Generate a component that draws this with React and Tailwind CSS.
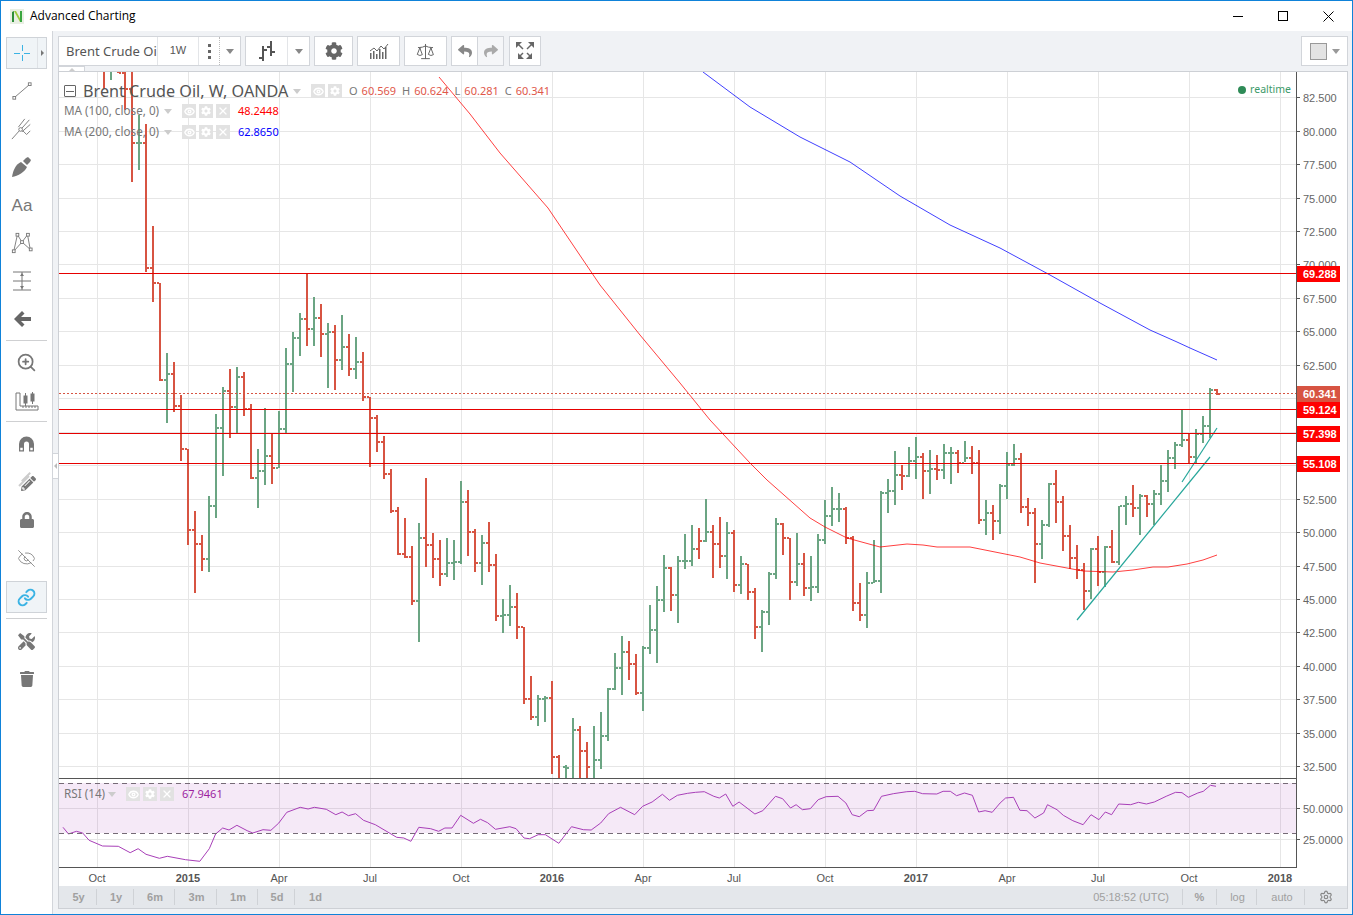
import React from "react";
import { FaCog, FaReply, FaShare, FaLock, FaTrash, FaTools, FaPencilAlt } from "react-icons/fa";
import { Eye, EyeOff, Link, Scale, Settings, X, ZoomIn } from "lucide-react";

const GREEN = "#6ba583";
const RED = "#d75442";

// weekly bars, read as [high, low, close, up, open?] in crop coordinates
const seg = (x0, base, k, rows) =>
  rows.map((r, i) => ({
    x: x0 + 7 * i,
    h: Math.round(base + r[0] / k),
    l: Math.round(base + r[1] / k),
    c: Math.round(base + r[2] / k),
    up: r[3] === 1,
    o: r[4] != null ? Math.round(base + r[4] / k) : null,
  }));

const rawBars = [
  ...seg(104, 72, 2.9037, [
    [-60, 50, -30, 0], [-60, 22, -10, 1], [-60, 4, 2, 0], [-60, 110, 50, 0], [-60, 318, 205, 0],
    [125, 285, 205, 1], [152, 580, 568, 0], [447, 667, 614, 0], [614, 897, 895, 0], [817, 1020, 876, 1],
    [843, 988, 970, 0], [938, 1130, 1094, 0], [1094, 1374, 1330, 0], [1275, 1512, 1370, 0], [1343, 1450, 1414, 0],
    [1232, 1453, 1260, 1], [993, 1296, 1033, 1], [916, 1174, 925, 1], [862, 1064, 972, 0], [858, 1047, 887, 1],
    [871, 1000, 978, 0], [965, 1183, 1180, 0], [1096, 1265, 1158, 1], [977, 1200, 1114, 1], [1050, 1195, 1150, 0],
    [985, 1150, 1036, 1], [800, 1050, 848, 1], [756, 930, 772, 1], [700, 824, 716, 1], [585, 797, 745, 0],
    [654, 795, 713, 1], [675, 827, 760, 0], [730, 918, 755, 1], [736, 924, 835, 0], [707, 864, 798, 1],
    [762, 882, 861, 0], [770, 890, 842, 1], [814, 956, 945, 0], [945, 1148, 1004, 0], [997, 1102, 1073, 0],
  ]),
  ...seg(384, 380, 3, [
    [168, 296, 282, 0], [267, 400, 393, 0], [382, 526, 522, 0], [415, 535, 530, 0], [498, 674, 662, 0],
    [430, 785, 473, 1], [295, 560, 494, 0], [460, 593, 537, 0], [481, 617, 581, 0], [475, 590, 549, 1],
    [481, 599, 546, 1], [304, 551, 366, 1], [331, 527, 455, 0], [448, 575, 549, 0], [466, 614, 488, 1],
    [427, 575, 554, 0], [523, 722, 707, 0], [658, 758, 705, 1], [616, 737, 680, 1], [640, 776, 740, 0],
    [740, 971, 957, 0], [889, 1021, 1011, 0], [946, 1037, 957, 1], [949, 1025, 953, 1], [904, 1181, 1130, 0],
    [1126, 1300, 1260, 0], [1155, 1300, 1163, 1, 1160], [1015, 1300, 1050, 1, 1230], [1039, 1300, 1112, 0], [1087, 1300, 1161, 0],
    [1039, 1300, 1139, 1, 1230], [997, 1166, 1068, 1], [923, 1082, 927, 1], [820, 930, 864, 1], [769, 944, 816, 1],
    [784, 899, 852, 0], [823, 944, 939, 0], [797, 992, 804, 1], [676, 821, 749, 1], [619, 848, 660, 1],
    [526, 695, 564, 1], [562, 692, 645, 0], [529, 728, 543, 1],
  ]),
  ...seg(685, 420, 3, [
    [343, 446, 423, 1], [316, 437, 387, 1], [325, 416, 362, 0], [238, 367, 336, 1], [316, 473, 372, 0],
    [292, 443, 408, 0], [307, 476, 339, 1], [331, 515, 495, 0], [409, 521, 431, 1], [431, 539, 516, 0],
    [505, 656, 621, 0], [571, 695, 575, 1], [457, 614, 462, 1], [295, 476, 312, 1], [310, 404, 355, 0],
    [353, 539, 486, 0], [340, 497, 432, 1], [400, 527, 504, 0], [409, 542, 500, 1], [343, 518, 360, 1],
    [241, 371, 288, 1], [202, 317, 268, 1], [220, 305, 268, 1], [262, 371, 353, 0], [349, 572, 549, 0],
    [490, 602, 585, 0], [457, 623, 489, 1], [361, 488, 483, 1], [214, 518, 218, 1], [178, 278, 212, 1],
    [94, 254, 165, 1], [136, 209, 168, 0], [82, 170, 122, 1], [52, 176, 110, 1], [100, 236, 153, 0],
    [91, 221, 147, 1], [106, 179, 149, 0],
  ]),
  ...seg(944, 390, 3, [
    [163, 266, 188, 1], [172, 281, 188, 1], [181, 248, 218, 0], [154, 215, 203, 1], [168, 251, 218, 0],
    [181, 401, 390, 0], [331, 434, 369, 1], [346, 449, 393, 0], [283, 431, 288, 1], [186, 326, 225, 1],
    [162, 227, 207, 1], [190, 368, 351, 0], [325, 407, 368, 0], [355, 578, 462, 0], [391, 506, 405, 1],
    [280, 410, 282, 1], [241, 398, 336, 0], [319, 482, 437, 0], [406, 538, 503, 0], [466, 566, 540, 0],
    [520, 660, 603, 0], [475, 628, 477, 1], [439, 587, 545, 0], [468, 590, 470, 1], [421, 520, 517, 0],
    [347, 524, 347, 1], [319, 404, 342, 1], [286, 382, 353, 0], [313, 434, 317, 1], [316, 380, 342, 0],
    [301, 404, 311, 1], [226, 344, 272, 1], [181, 305, 204, 1], [157, 236, 165, 1], [60, 172, 150, 1],
    [128, 220, 202, 0], [118, 220, 133, 1], [79, 160, 107, 1], [-6, 143, 1, 1], [-3, 15, 12, 0, 0],
  ]),
];

const priceLabels = ["82.500", "80.000", "77.500", "75.000", "72.500", "70.000", "67.500", "65.000", "62.500", "60.000", "57.500", "55.000", "52.500", "50.000", "47.500", "45.000", "42.500", "40.000", "37.500", "35.000", "32.500"];
// these sit fully under a price tag in the picture
const hiddenPrices = ["60.000", "57.500", "55.000"];
const priceY = (i) => Math.round(97.2 + 33.45 * i);

const timeLabels = [
  [97, "Oct"], [188, "2015", true], [279, "Apr"], [370, "Jul"], [461, "Oct"], [552, "2016", true], [643, "Apr"],
  [734, "Jul"], [825, "Oct"], [916, "2017", true], [1007, "Apr"], [1098, "Jul"], [1189, "Oct"], [1280, "2018", true],
];

const ma100 = "439,77 470,114 500,153 548,208 575,248 600,285 640,335 680,383 710,420 750,463 767,480 810,518 825,527 847,538 880,547 907,544 923,545 937,547 970,547 1000,553 1020,557 1040,563 1067,568 1083,571 1113,572 1133,570 1153,567 1168,567 1187,564 1203,560 1217,555";
const ma200 = "703,72 750,107 800,137 850,162 900,196 950,225 1000,248 1050,275 1100,303 1150,330 1177,342 1190,348 1217,360";

const rsiRaw = [
  [5,148],[12,168],[22,160],[30,165],[38,187],[55,204],[75,205],[90,224],[100,212],[110,229],[127,241],[137,235],[160,245],[178,250],[190,212],[198,168],[207,150],[215,156],[225,142],[238,158],[245,165],[258,155],[268,157],[278,135],[288,103],[305,88],[315,93],[323,88],[338,94],[350,110],[358,102],[366,113],[375,107],[385,127],[400,140],[427,178],[436,180],[445,190],[455,148],[470,152],[480,160],[488,150],[497,150],[508,112],[524,136],[533,124],[542,134],[552,154],[570,146],[578,152],[588,180],[595,182],[606,170],[615,170],[632,196],[648,146],[663,155],[673,156],[685,135],[695,107],[710,88],[728,110],[738,85],[750,72],[763,49],[772,67],[782,52],[795,46],[805,43],[816,41],[828,55],[835,60],[843,48],[852,85],[860,72],[880,108],[890,98],[906,55],[915,62],[925,90],[932,80],[940,95],[950,92],[960,65],[970,56],[985,55],[995,75],[1003,110],[1012,116],[1022,98],[1030,97],[1040,55],[1055,47],[1072,41],[1082,40],[1092,47],[1110,48],[1118,40],[1127,40],[1135,53],[1145,45],[1155,52],[1163,102],[1171,98],[1180,103],[1190,75],[1197,60],[1207,58],[1215,97],[1224,98],[1234,120],[1245,105],[1250,80],[1262,95],[1270,112],[1282,128],[1295,140],[1305,110],[1315,125],[1323,102],[1331,110],[1340,78],[1355,80],[1365,73],[1375,78],[1385,72],[1400,55],[1412,43],[1420,44],[1428,58],[1440,45],[1447,40],[1456,22],[1463,25],
];
const rsiLine = rsiRaw.map(([x, y]) => `${(59 + x / 1.2645).toFixed(1)},${(778 + y / 3).toFixed(1)}`).join(" ");

const levels = [
  [273, "69.288"],
  [409, "59.124"],
  [433, "57.398"],
  [463, "55.108"],
];

const ohlc = [["O", "60.569"], ["H", "60.624"], ["L", "60.281"], ["C", "60.341"]];

const Caret = ({ className = "" }) => (
  <span className={`w-0 h-0 border-l-[4px] border-r-[4px] border-t-[5px] border-l-transparent border-r-transparent ${className}`} />
);

const Chip = ({ children }) => (
  <span className="w-[14px] h-[14px] bg-[#e2e2e2] text-white flex items-center justify-center">{children}</span>
);

const Chips = ({ close = true }) => (
  <span className="flex gap-[3px]">
    <Chip><Eye size={11} strokeWidth={3} /></Chip>
    <Chip><FaCog size={10} /></Chip>
    {close && <Chip><X size={12} strokeWidth={2.5} /></Chip>}
  </span>
);

const ChartSvg = () => (
  <svg width="1288" height="814" viewBox="59 72 1288 814" className="block" fontFamily="'Liberation Sans', Arial, sans-serif">
    <defs>
      <clipPath id="main-pane"><rect x="59" y="72" width="1237" height="706" /></clipPath>
    </defs>
    <g shapeRendering="crispEdges">
      {timeLabels.map(([x]) => <rect key={x} x={x} y="72" width="1" height="795" fill="#e6e6e6" />)}
      {priceLabels.map((_, i) => <rect key={i} x="59" y={priceY(i)} width="1237" height="1" fill="#e6e6e6" />)}
      <rect x="59" y="808" width="1237" height="1" fill="#e6e6e6" />
      <rect x="59" y="839" width="1237" height="1" fill="#e6e6e6" />
      <rect x="59" y="783" width="1237" height="50" fill="#9c27b0" fillOpacity="0.1" />
    </g>
    <g clipPath="url(#main-pane)">
      <g shapeRendering="crispEdges">
        {rawBars.map((b, i) => {
          const open = b.o != null ? b.o : i > 0 ? rawBars[i - 1].c : b.c;
          const color = b.up ? GREEN : RED;
          return (
            <g key={b.x} fill={color}>
              <rect x={b.x - 1} y={b.h} width="2" height={b.l - b.h} />
              <rect x={b.x - 3} y={open - 1} width="2" height="2" />
              <rect x={b.x + 1} y={b.c - 1} width="2" height="2" />
            </g>
          );
        })}
      </g>
      <polyline points={ma100} fill="none" stroke="#ff0000" strokeOpacity="0.75" strokeWidth="1" />
      <polyline points={ma200} fill="none" stroke="#0000ff" strokeOpacity="0.75" strokeWidth="1" />
      <line x1="1077" y1="620" x2="1210" y2="457" stroke="#26a69a" strokeWidth="1.2" />
      <line x1="1182" y1="482" x2="1217" y2="428" stroke="#26a69a" strokeWidth="1.2" />
      <g shapeRendering="crispEdges">
        <rect x="59" y="273" width="1237" height="1" fill="#e60000" />
        <rect x="59" y="409" width="1237" height="1" fill="#e60000" />
        <rect x="59" y="433" width="1237" height="1" fill="#e60000" />
        <rect x="59" y="463" width="1237" height="1" fill="#e60000" />
        <line x1="59" y1="393.5" x2="1296" y2="393.5" stroke={RED} strokeDasharray="2 2" />
      </g>
    </g>
    <polyline points={rsiLine} fill="none" stroke="#a83fb8" strokeWidth="1" />
    <g shapeRendering="crispEdges">
      <line x1="59" y1="783.5" x2="1296" y2="783.5" stroke="#756a76" strokeDasharray="5 4" />
      <line x1="59" y1="833.5" x2="1296" y2="833.5" stroke="#756a76" strokeDasharray="5 4" />
      <rect x="59" y="778" width="1237" height="1" fill="#555" />
      <rect x="59" y="867" width="1237" height="1" fill="#555" />
      <rect x="1296" y="72" width="1" height="796" fill="#555" />
      {priceLabels.map((_, i) => <rect key={i} x="1297" y={priceY(i)} width="3" height="1" fill="#555" />)}
      <rect x="1297" y="808" width="3" height="1" fill="#555" />
      <rect x="1297" y="839" width="3" height="1" fill="#555" />
    </g>
    <g fontSize="11" fill="#666">
      {priceLabels.map((t, i) => hiddenPrices.includes(t) ? null : <text key={t} x="1303" y={priceY(i) + 5}>{t}</text>)}
      <text x="1303" y="813">50.0000</text>
      <text x="1303" y="844">25.0000</text>
    </g>
    <g fontSize="11" fill="#555" textAnchor="middle">
      {timeLabels.map(([x, t, bold]) => <text key={x} x={x} y="882" fontWeight={bold ? "700" : "400"}>{t}</text>)}
    </g>
    <g shapeRendering="crispEdges">
      <rect x="1297" y="386" width="43" height="16" fill={RED} />
      {levels.map(([y]) => <rect key={y} x="1297" y={y - 7} width="43" height="16" fill="#ff0000" />)}
    </g>
    <g fontSize="11" fontWeight="700" fill="#fff">
      <text x="1303" y="398">60.341</text>
      {levels.map(([y, t]) => <text key={t} x="1303" y={y + 5}>{t}</text>)}
    </g>
  </svg>
);

const Legend = () => (
  <div className="absolute left-0 top-0 pl-[5px] text-[11.7px] text-[#777] font-['Noto_Sans',sans-serif] whitespace-nowrap">
    <div className="h-[20px] mt-[9px] flex items-center">
      <span className="w-[12px] h-[12px] border border-[#666] rounded-[1px] flex items-center justify-center">
        <span className="w-[8px] h-px bg-[#666]" />
      </span>
      <span className="ml-[7px] w-[206px] text-[16.2px] text-[#555]">Brent Crude Oil, W, OANDA</span>
      <Caret className="ml-[4px] border-t-[#ccc]" />
      <span className="ml-[10px]"><Chips close={false} /></span>
      <span className="ml-[7px] flex gap-[6px] text-[11px] text-[#777]">
        {ohlc.map(([k, v]) => (
          <span key={k} className="flex gap-[4px]">
            <span>{k}</span>
            <span className="text-[#e0574a]">{v}</span>
          </span>
        ))}
      </span>
    </div>
    <div className="h-[20px] flex items-center">
      <span className="w-[96px]">MA (100, close, 0)</span>
      <Caret className="ml-[4px] border-t-[#ccc]" />
      <span className="ml-[10px]"><Chips /></span>
      <span className="ml-[8px] text-[11px] text-[#ff0000]">48.2448</span>
    </div>
    <div className="h-[20px] mt-px flex items-center">
      <span className="w-[96px]">MA (200, close, 0)</span>
      <Caret className="ml-[4px] border-t-[#ccc]" />
      <span className="ml-[10px]"><Chips /></span>
      <span className="ml-[8px] text-[11px] text-[#0000ff]">62.8650</span>
    </div>
  </div>
);

const RsiLegend = () => (
  <div className="absolute left-[5px] top-[712px] h-[20px] flex items-center text-[11.7px] text-[#777] font-['Noto_Sans',sans-serif] whitespace-nowrap">
    <span className="w-[40px]">RSI (14)</span>
    <Caret className="ml-[4px] border-t-[#ccc]" />
    <span className="ml-[10px]"><Chips /></span>
    <span className="ml-[8px] text-[11px] text-[#9c1fa0]">67.9461</span>
  </div>
);

const Group = ({ className = "", children }) => (
  <div className={`h-[30px] bg-white border border-[#d2d5da] flex items-center justify-center shrink-0 ${className}`}>{children}</div>
);

const BarsIcon = () => (
  <svg width="18" height="20" viewBox="0 0 18 20" fill="#555">
    <rect x="4" y="5" width="2" height="15" />
    <rect x="1" y="16" width="3" height="2" />
    <rect x="6" y="8" width="3" height="2" />
    <rect x="12" y="0" width="2" height="15" />
    <rect x="9" y="5" width="3" height="2" />
    <rect x="14" y="10" width="3" height="2" />
  </svg>
);

const IndicatorsIcon = () => (
  <svg width="20" height="16" viewBox="0 0 20 16" fill="#666">
    <rect x="1" y="10" width="1.5" height="6" />
    <rect x="4" y="8" width="1.5" height="8" />
    <rect x="7" y="11" width="1.5" height="5" />
    <rect x="10" y="6" width="1.5" height="10" />
    <rect x="13" y="9" width="1.5" height="7" />
    <rect x="16" y="4" width="1.5" height="12" />
    <polyline points="1,8 5,5 8,8 12,3 15,6 19,1" fill="none" stroke="#666" strokeWidth="1" />
  </svg>
);

const FullIcon = () => (
  <svg width="18" height="18" viewBox="0 0 18 18" fill="#666" stroke="#666">
    <path d="M0 0h6L0 6z" stroke="none" /><path d="M2 2l5 5" strokeWidth="1.5" />
    <path d="M18 0h-6l6 6z" stroke="none" /><path d="M16 2l-5 5" strokeWidth="1.5" />
    <path d="M0 18h6l-6-6z" stroke="none" transform="translate(2 -1)" /><path d="M7 11l-4 4" strokeWidth="1.5" />
    <path d="M18 18h-6l6-6z" stroke="none" transform="translate(-2 -1)" /><path d="M11 11l4 4" strokeWidth="1.5" />
  </svg>
);

const TopBar = () => (
  <div className="relative h-[40px] pl-[5px] pt-[5px] flex gap-[4px] shrink-0">
    <div className="h-[30px] w-[183px] bg-white border border-[#d2d5da] flex shrink-0 text-[#555]">
      <div className="w-[99px] pl-[7px] text-[13px] leading-[28px] overflow-hidden whitespace-nowrap font-['Noto_Sans',sans-serif] border-r border-[#e3e5e8]">Brent Crude Oil</div>
      <div className="w-[41px] text-center text-[11px] leading-[26px] border-r border-[#e3e5e8] font-['Liberation_Sans',sans-serif]">1W</div>
      <div className="w-[21px] flex flex-col items-center justify-center gap-[3px] border-r border-dotted border-[#bbb]">
        <span className="w-[3px] h-[3px] bg-[#666]" />
        <span className="w-[3px] h-[3px] bg-[#666]" />
        <span className="w-[3px] h-[3px] bg-[#666]" />
      </div>
      <div className="flex-1 flex items-center justify-center"><Caret className="border-t-[#888]" /></div>
    </div>
    <div className="h-[30px] w-[65px] bg-white border border-[#d2d5da] flex shrink-0">
      <div className="w-[42px] flex items-center justify-center border-r border-[#e3e5e8]"><BarsIcon /></div>
      <div className="flex-1 flex items-center justify-center"><Caret className="border-t-[#888]" /></div>
    </div>
    <Group className="w-[39px]"><FaCog size={18} color="#666" /></Group>
    <Group className="w-[43px]"><IndicatorsIcon /></Group>
    <Group className="w-[43px]"><Scale size={19} strokeWidth={1.25} color="#666" /></Group>
    <div className="h-[30px] w-[53px] bg-white border border-[#d2d5da] flex shrink-0">
      <div className="w-[26px] flex items-center justify-center border-r border-[#d2d5da]"><FaReply size={14} color="#888" /></div>
      <div className="flex-1 flex items-center justify-center bg-[#f5f6f8]"><FaShare size={14} color="#aaa" /></div>
    </div>
    <Group className="w-[32px] ml-px"><FullIcon /></Group>
    <div className="ml-auto mr-[4px] w-[47px] h-[30px] bg-white border border-[#d2d5da] flex items-center pl-[8px] gap-[5px] shrink-0">
      <span className="w-[17px] h-[17px] bg-[#e3e3e3] border border-[#999]" />
      <Caret className="border-t-[#999]" />
    </div>
    <div className="absolute left-[5px] top-[35px] w-[27px] h-[6px] bg-white border border-[#d2d5da] flex items-center justify-center">
      <span className="w-0 h-0 border-l-[3px] border-r-[3px] border-b-[3px] border-l-transparent border-r-transparent border-b-[#ccc]" />
    </div>
  </div>
);

const sideTop = [
  <svg key="line" width="20" height="20" viewBox="0 0 22 22" fill="none" stroke="#777"><rect x="1" y="17" width="3" height="3" /><rect x="18" y="2" width="3" height="3" /><line x1="4" y1="17" x2="18" y2="5" /></svg>,
  <svg key="fork" width="22" height="22" viewBox="0 0 24 24" fill="none" stroke="#777"><path d="M1 23L9 14" /><circle cx="10.5" cy="12.5" r="2" /><path d="M12 11L20 2M12 15L21 7M8 10L15 1M13 14l4 4 4-4" /></svg>,
  <svg key="brush" width="20" height="20" viewBox="0 0 20 20" fill="#777"><path d="M0 20c1-7 4-13 9-15l6 5c-2 5-9 9-15 10z" /><path d="M11 4l3-3 2-1 3 3-1 2-3 3z" /></svg>,
  <span key="aa" className="text-[17px] text-[#777] font-['Liberation_Sans',sans-serif] leading-none">Aa</span>,
  <svg key="poly" width="22" height="22" viewBox="0 0 24 24" fill="none" stroke="#777"><path d="M3 21L7 3 12 11 18 3l3 16-9-8-9 10z" /><g fill="#fff"><rect x="1.5" y="19.5" width="3" height="3" /><rect x="5.5" y="1.5" width="3" height="3" /><rect x="10.5" y="9.5" width="3" height="3" /><rect x="17" y="1.5" width="3" height="3" /><rect x="20" y="17.5" width="3" height="3" /></g></svg>,
  <svg key="measure" width="20" height="20" viewBox="0 0 20 20" fill="#777" stroke="#777"><path d="M1 1h18M1 10h18M1 19h18M10 1v18" fill="none" /><path d="M8 5l2-3 2 3zM8 15l2 3 2-3z" stroke="none" /></svg>,
  <svg key="back" width="17" height="16" viewBox="0 0 17 16" fill="#666"><path d="M8 0L0 8l8 8 2.5-2.5L7 10h10V6H7l3.5-3.5z" /></svg>,
];

const sideMid = [
  <ZoomIn key="zoom" size={21} strokeWidth={2} color="#777" />,
  <svg key="ruler" width="24" height="20" viewBox="0 0 24 20" fill="none" stroke="#777"><path d="M1 1v17h22v-4H5V1z" /><path d="M8 14v2M11 14v2M14 14v2M17 14v2M20 14v2" /><g fill="#777"><rect x="9" y="4" width="3" height="7" /><rect x="16" y="2" width="3" height="7" /></g><path d="M10.5 1v13M17.5 0v12" /></svg>,
];

const Side = () => (
  <div className="w-[52px] shrink-0 border-r border-[#d2d5da] flex flex-col pt-[6px] bg-white">
    <div className="mx-[5px] h-[32px] w-[41px] bg-[#f0f4f7] border border-[#cfd3d8] flex">
      <div className="w-[31px] flex items-center justify-center border-r border-[#dfe2e6]">
        <svg width="16" height="16" viewBox="0 0 16 16" stroke="#3bb3e4" shapeRendering="crispEdges"><path d="M8 0v6M8 10v6M0 8h6M10 8h6" /></svg>
      </div>
      <div className="flex-1 flex items-center justify-center">
        <span className="w-0 h-0 border-t-[3px] border-b-[3px] border-l-[3px] border-t-transparent border-b-transparent border-l-[#777]" />
      </div>
    </div>
    <div className="h-[3px] shrink-0" />
    {sideTop.map((icon, i) => (
      <div key={i} className="h-[38px] shrink-0 w-[42px] flex items-center justify-center">{icon}</div>
    ))}
    <div className="mx-[5px] mt-[2px] h-px bg-[#cfd0d2]" />
    <div className="h-[2px] shrink-0" />
    {sideMid.map((icon, i) => (
      <div key={i} className="h-[39px] shrink-0 flex items-center justify-center">{icon}</div>
    ))}
    <div className="mx-[5px] h-px bg-[#cfd0d2]" />
    <div className="h-[3px] shrink-0" />
    <div className="h-[38px] shrink-0 flex items-center justify-center">
      <svg width="15" height="16" viewBox="0 0 18 18" fill="#777"><path d="M0 18V9a9 9 0 0 1 18 0v9h-6V9a3 3 0 0 0-6 0v9z" /><rect x="1.5" y="13.5" width="3" height="3" fill="#fff" /><rect x="13.5" y="13.5" width="3" height="3" fill="#fff" /></svg>
    </div>
    <div className="h-[38px] shrink-0 flex items-center justify-center relative">
      <span className="absolute left-[19px] top-[13px] w-[12px] h-[2px] bg-[#ccc] -rotate-45" />
      <span className="absolute left-[16px] top-[17px] w-[14px] h-[2px] bg-[#ccc] -rotate-45" />
      <span className="ml-[4px] mt-[3px]"><FaPencilAlt size={15} color="#777" /></span>
    </div>
    <div className="h-[38px] shrink-0 flex items-center justify-center"><FaLock size={16} color="#777" /></div>
    <div className="h-[38px] shrink-0 flex items-center justify-center"><EyeOff size={19} strokeWidth={1} color="#777" /></div>
    <div className="mx-[5px] mt-[4px] h-[32px] w-[41px] bg-[#f0f4f7] border border-[#cfd3d8] flex items-center justify-center">
      <Link size={19} strokeWidth={2.5} color="#3bb3e4" />
    </div>
    <div className="mx-[5px] mt-[5px] h-px bg-[#cfd0d2]" />
    <div className="h-[3px] shrink-0" />
    <div className="h-[38px] shrink-0 flex items-center justify-center"><FaTools size={17} color="#777" /></div>
    <div className="h-[38px] shrink-0 flex items-center justify-center"><FaTrash size={16} color="#777" /></div>
  </div>
);

const rangesLeft = [["5y", "w-[38px]"], ["1y", "w-[37px]"], ["6m", "w-[41px]"], ["3m", "w-[42px]"], ["1m", "w-[41px]"], ["5d", "w-[37px]"]];

const BottomBar = () => (
  <div className="h-[22px] bg-[#e4e7eb] flex items-center text-[11px] text-[#a0a0a0] font-['Liberation_Sans',sans-serif] font-bold">
    {rangesLeft.map(([t, w]) => (
      <div key={t} className={`${w} h-[16px] leading-[16px] text-center pl-[2px] border-r border-[#cfd2d6]`}>{t}</div>
    ))}
    <div className="w-[41px] text-center">1d</div>
    <div className="ml-auto w-[90px] pr-[13px] whitespace-nowrap text-right font-normal h-[16px] leading-[16px] border-r border-[#cfd2d6]">05:18:52 (UTC)</div>
    <div className="w-[34px] h-[16px] leading-[16px] text-center border-r border-[#cfd2d6]">%</div>
    <div className="w-[40px] h-[16px] leading-[16px] text-center pl-[2px] border-r border-[#cfd2d6] font-normal">log</div>
    <div className="w-[48px] h-[16px] leading-[16px] text-center pl-[3px] border-r border-[#cfd2d6] font-normal">auto</div>
    <div className="w-[42px] flex justify-center"><Settings size={14} color="#888" /></div>
  </div>
);

const Logo = () => (
  <svg width="14" height="15" viewBox="0 0 14 15">
    <rect width="14" height="15" fill="#e9efe3" />
    <path d="M2 13V3l2-1v11z" fill="#2f8f3a" />
    <path d="M4 2l6 11h2L6 2z" fill="#9acb3c" />
    <path d="M10 2h2v11h-2z" fill="#3aa63f" />
  </svg>
);

const App = () => (
  <div className="w-[1353px] h-[915px] border border-[#0f82d9] bg-white flex flex-col overflow-hidden">
    <div className="h-[30px] shrink-0 flex items-center pl-[9px] text-black text-[12px] font-['Open_Sans',sans-serif]">
      <Logo />
      <span className="ml-[6px]">Advanced Charting</span>
      <div className="ml-auto flex items-center pr-[18px] gap-[35px]">
        <span className="w-[10px] h-px bg-black" />
        <span className="w-[10px] h-[10px] border border-black" />
        <svg width="11" height="11" viewBox="0 0 11 11" stroke="#000"><path d="M0.5 0.5l10 10M10.5 0.5l-10 10" /></svg>
      </div>
    </div>
    <div className="flex flex-1 min-h-0">
      <Side />
      <div className="flex-1 min-w-0 flex flex-col bg-[#f0f2f5]">
        <TopBar />
        <div className="flex flex-1 min-h-0">
          <div className="w-[5px] shrink-0">
            <div className="mt-[382px] h-[26px] bg-white border-y border-[#d2d5da] flex items-center justify-center">
              <span className="w-0 h-0 border-t-[3px] border-b-[3px] border-r-[3px] border-t-transparent border-b-transparent border-r-[#bbb]" />
            </div>
          </div>
          <div className="w-[1290px] h-[838px] shrink-0 border border-[#cdd0d5] bg-white relative flex flex-col">
            <ChartSvg />
            <Legend />
            <RsiLegend />
            <div className="absolute right-[56px] top-[10px] flex items-center gap-[4px] text-[10.5px] text-[#3c9a6a] font-['Noto_Sans',sans-serif]">
              <span className="w-[8px] h-[8px] rounded-full bg-[#2e8b57]" />
              realtime
            </div>
            <BottomBar />
          </div>
        </div>
      </div>
    </div>
  </div>
);

export default App;
